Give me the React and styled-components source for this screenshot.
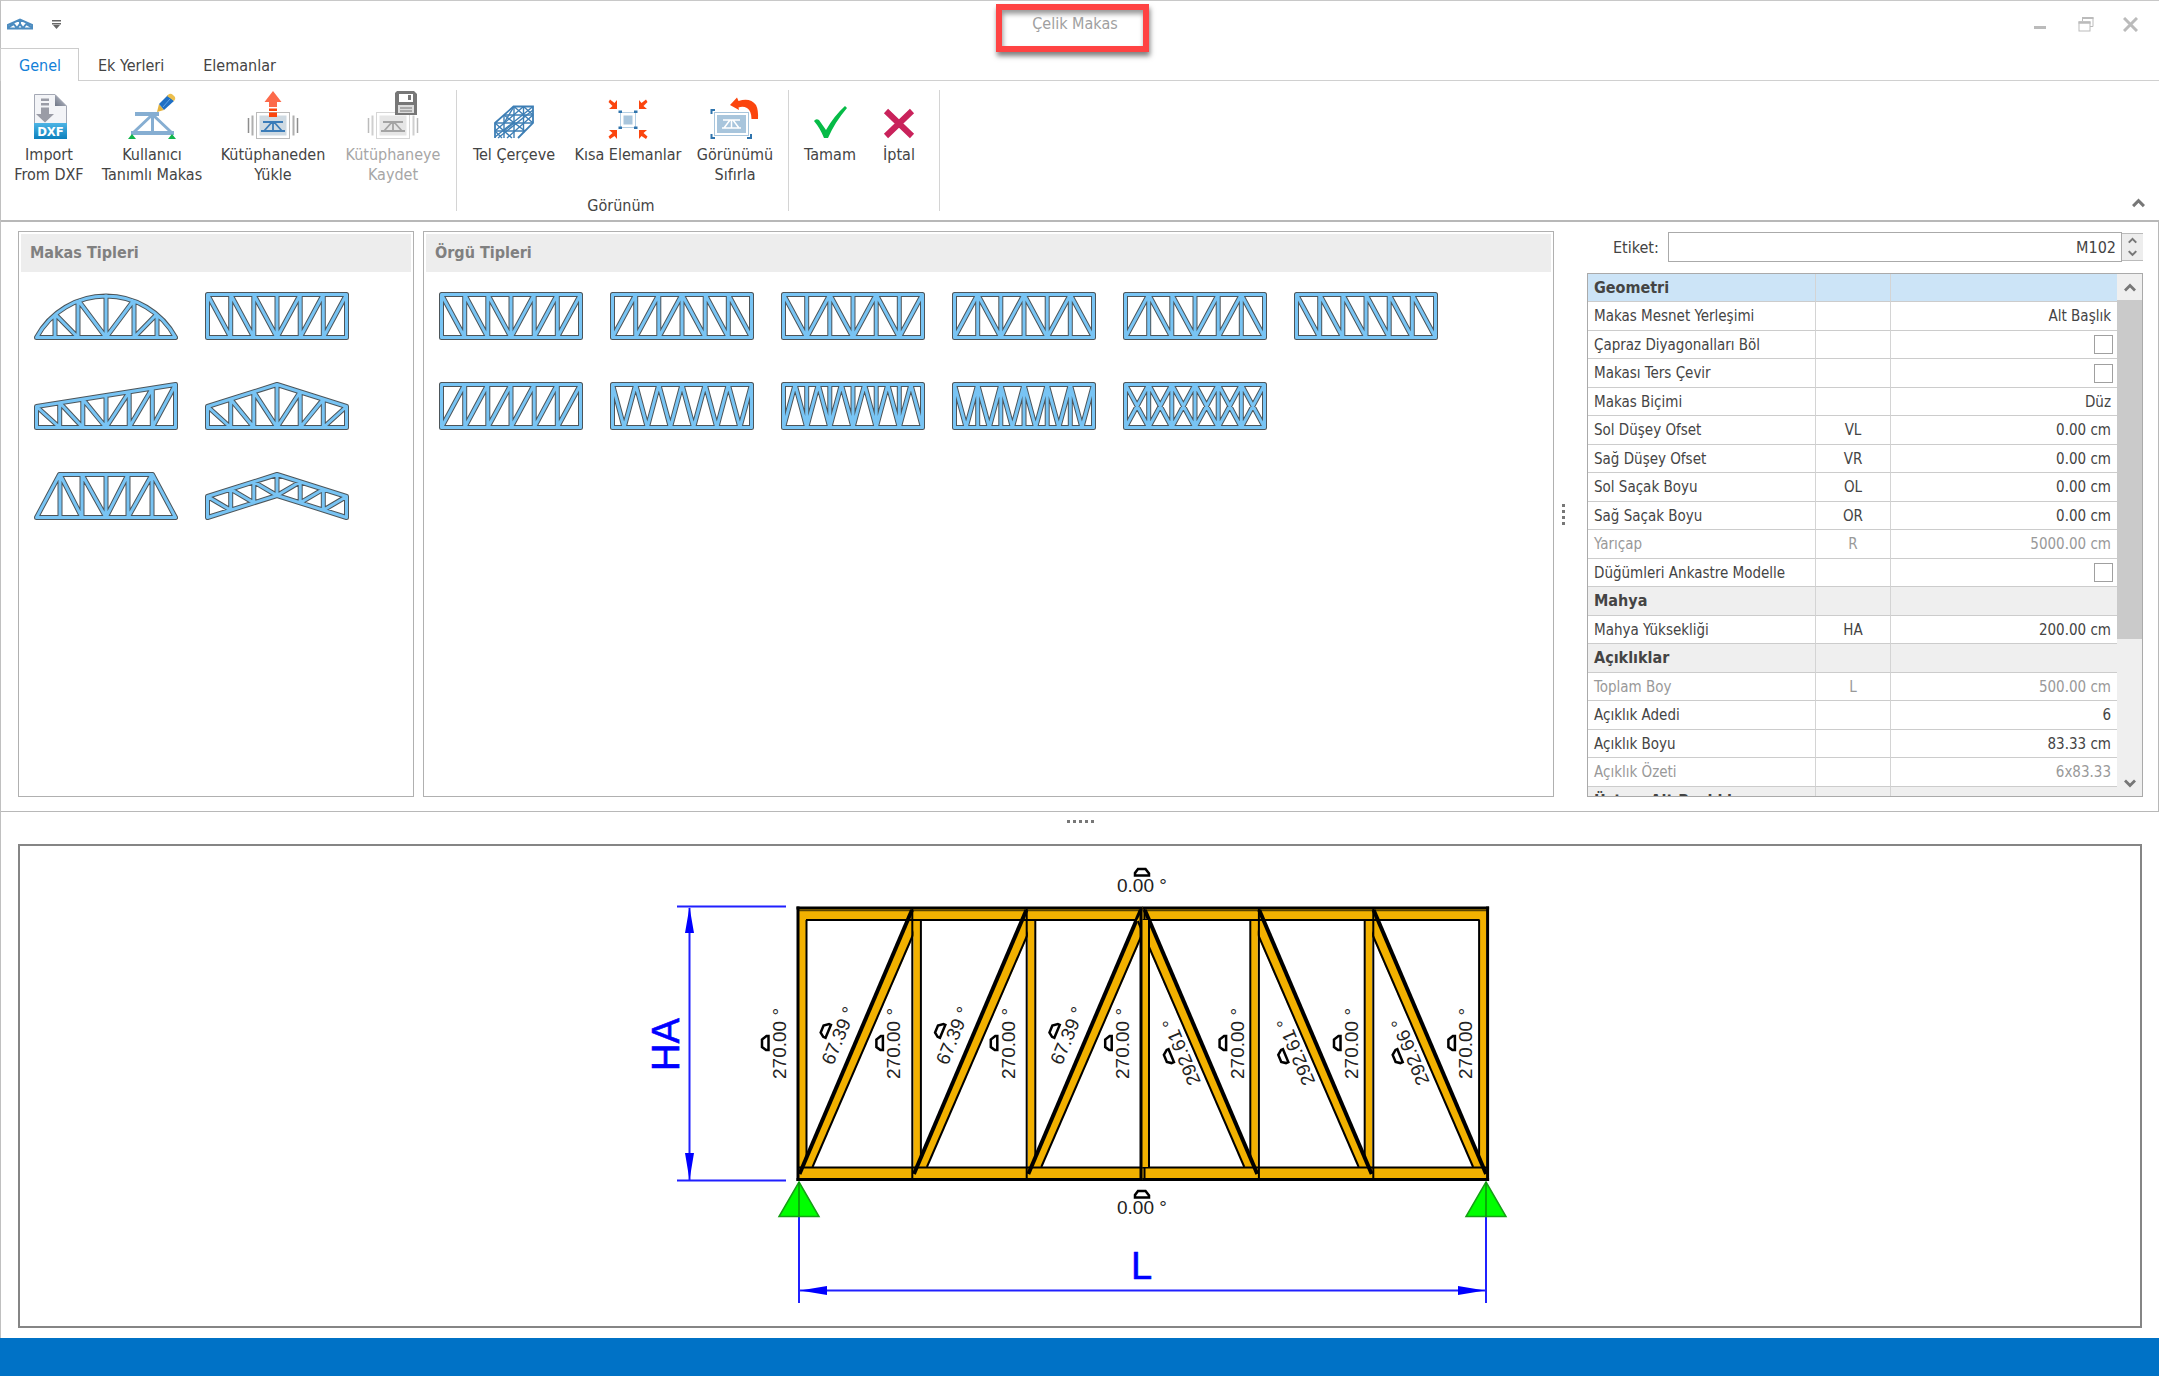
import React, { useState } from 'react'
import styled, { createGlobalStyle } from 'styled-components'

const GlobalStyle = createGlobalStyle`
    * {
        box-sizing: border-box;
    }

    body {
        margin: 0;
        background: #fff;
        color: #444;
        font-family: 'DejaVu Sans Condensed', 'DejaVu Sans', sans-serif;
        font-size: 16px;
    }

    button, input {
        font: inherit;
        color: inherit;
    }
`;

const Shell = styled.div`
    display: flex;
    flex-direction: column;
    min-height: 100vh;
    border-top: 1px solid #c8c8c8;
    border-left: 1px solid #c0c0c0;
`;

const TitleBar = styled.header`
    display: grid;
    grid-template-columns: 1fr auto 1fr;
    align-items: start;
    height: 47px;
    padding-right: 15px;
`;

const QuickAccess = styled.div`
    display: flex;
    align-items: center;
    gap: 18px;
    height: 46px;
    padding-left: 6px;
`;

const TitleFrame = styled.div`
    margin-top: 3px;
    width: 153px;
    height: 48px;
    border: 6px solid #ff4343;
    box-shadow: 1px 4px 5px rgba(0, 0, 0, 0.5), inset 1px 4px 5px rgba(0, 0, 0, 0.4);
    text-align: center;
    z-index: 1;
`;

const Title = styled.h1`
    margin: 0;
    padding-left: 5px;
    font-size: 16px;
    font-weight: normal;
    line-height: 28px;
    color: #a0a0a0;
`;

const WindowButtons = styled.div`
    display: flex;
    justify-content: flex-end;
    align-items: center;
    height: 46px;
    gap: 14px;
`;

const IconButton = styled.button`
    display: flex;
    align-items: center;
    justify-content: center;
    width: ${props => props.$w || 32}px;
    height: ${props => props.$h || 24}px;
    padding: 0;
    border: 0;
    background: none;
`;

const Tabs = styled.nav`
    display: flex;
    height: 33px;
    margin-bottom: -1px;
    position: relative;
`;

const Tab = styled.button`
    padding: 1px 17px 0 18px;
    margin-left: ${props => props.$active ? '-1px' : '0'};
    border: 1px solid ${props => props.$active ? '#ccc' : 'transparent'};
    border-bottom: 0;
    background: ${props => props.$active ? '#fff' : 'none'};
    color: ${props => props.$active ? '#1380d8' : '#444'};
    line-height: 32px;
    & + & {
        padding-right: 19px;
    }
`;

const Ribbon = styled.div`
    display: flex;
    height: 140px;
    padding-top: 9px;
    border-top: 1px solid #d0d0d0;
`;

const RibbonGroup = styled.section`
    display: flex;
    flex-direction: column;
    height: 121px;
    padding: 0 ${props => props.$right || 3}px 0 ${props => props.$left || 9}px;
    border-right: 1px solid #d4d4d4;
`;

const RibbonButtons = styled.div`
    display: flex;
    flex: 1;
`;

const RibbonButton = styled.button`
    display: flex;
    flex-direction: column;
    align-items: center;
    width: ${props => props.$w}px;
    padding: 0;
    border: 0;
    background: none;
    line-height: 20px;
    white-space: pre-line;
    &:disabled {
        color: #a6a6a6;
    }
    svg {
        margin-bottom: 5px;
        overflow: visible;
    }
`;

const GroupLabel = styled.div`
    text-align: center;
    line-height: 10px;
`;

const RibbonEnd = styled.div`
    display: flex;
    flex: 1;
    justify-content: flex-end;
    align-items: flex-end;
    padding: 0 5px 5px 0;
`;

const Workspace = styled.main`
    display: flex;
    padding: 9px 15px 14px 17px;
    border: 1px solid #b8b8b8;
    border-top-width: 2px;
    border-left: 0;
`;

const Panel = styled.section`
    width: ${props => props.$w ? props.$w + 'px' : 'auto'};
    flex: ${props => props.$w ? 'none' : 1};
    margin-right: ${props => props.$gap || 0}px;
    padding: 2px;
    border: 1px solid #b0b0b0;
`;

const PanelTitle = styled.h2`
    margin: 0;
    padding-left: 9px;
    background: #ededed;
    color: #808080;
    font-size: 16px;
    line-height: 38px;
`;

const Gallery = styled.div`
    display: grid;
    grid-template-columns: repeat(auto-fill, 144px);
    gap: 42px 27px;
    padding: 20px 13px;
`;

const GalleryItem = styled.button`
    display: block;
    height: 48px;
    padding: 0;
    border: 0;
    background: none;
    svg {
        display: block;
    }
`;

const Splitter = styled.div`
    display: flex;
    flex-direction: ${props => props.$vertical ? 'column' : 'row'};
    align-items: ${props => props.$vertical ? 'flex-start' : 'center'};
    justify-content: center;
    gap: 3px;
    ${props => props.$vertical ? 'width: 33px; padding-left: 8px;' : 'height: 32px; padding-bottom: 14px;'}
`;

const Dot = styled.i`
    width: 3px;
    height: 3px;
    background: #777;
`;

const Properties = styled.aside`
    width: 556px;
`;

const LabelRow = styled.div`
    display: flex;
    align-items: center;
    height: 32px;
    margin-bottom: 10px;
    padding-left: 26px;
    label {
        width: 55px;
    }
`;

const LabelInput = styled.input`
    flex: 1;
    min-width: 0;
    height: 30px;
    padding: 0 5px;
    border: 1px solid #aaa;
    text-align: right;
    outline: none;
`;

const Spinner = styled.div`
    display: flex;
    flex-direction: column;
    width: 21px;
    height: 28px;
    border: 1px solid #bbb;
    border-width: 1px 0;
    background: #ededed;
`;

const GridBox = styled.div`
    display: flex;
    height: 524px;
    border: 1px solid #aaa;
    overflow: hidden;
`;

const PropertyTable = styled.table`
    flex: 1;
    table-layout: fixed;
    border-spacing: 0;
    height: max-content;
    font-size: 15px;
    th, td {
        height: 28px;
        padding: 0 6px;
        border-bottom: 1px solid #ccc;
        border-right: 1px solid #d4d4d4;
        line-height: 20px;
        font-weight: normal;
        text-align: left;
        white-space: nowrap;
    }
    tr:nth-child(even) > * {
        height: 29px;
    }
    td:nth-child(2) {
        text-align: center;
    }
    td:last-child {
        border-right: 0;
        text-align: right;
    }
`;

const PropertyRow = styled.tr`
    color: ${props => props.$dim ? '#999' : '#444'};
`;

const SectionRow = styled.tr`
    background: ${props => props.$selected ? '#cce4f7' : '#efefef'};
    && th {
        font-size: 16px;
        font-weight: bold;
    }
`;

const Check = styled.input`
    appearance: none;
    display: block;
    width: 19px;
    height: 19px;
    margin: 0 -2px 0 auto;
    border: 1px solid #a0a0a0;
    background: #fff;
`;

const ScrollBar = styled.div`
    display: flex;
    flex-direction: column;
    width: 25px;
    background: #efefef;
`;

const ScrollThumb = styled.div`
    flex: 0 0 339px;
    margin-bottom: auto;
    background: #cacaca;
`;

const Canvas = styled.section`
    flex: 1;
    display: flex;
    align-items: center;
    justify-content: center;
    margin: 0 17px 10px;
    border: 2px solid #858585;
`;

const StatusBar = styled.footer`
    height: 38px;
    margin-left: -1px;
    background: #0072c6;
`;

const Chevron = ({ down, w = 12 }) => (
    <svg width={w} height={w * 0.75} viewBox="0 0 12 9" aria-hidden="true">
        <path d={down ? 'M1 1.5 6 6.5 11 1.5' : 'M1 7.5 6 2.5 11 7.5'} fill="none" stroke="#777" strokeWidth="2.8" />
    </svg>
)

/* ---- gallery trusses ---- */

const LEFT = 2.5;
const TOP = 2.5;
const BOTTOM = 45.5;
const PANEL = 139 / 6;
const nodes = [0, 1, 2, 3, 4, 5, 6].map(i => LEFT + i * PANEL);

// every panel is '\\', '/', 'x', 'v' (V inside the panel) or 'a' (inverted V)
const trussPath = (pattern, { top = () => TOP, bottom = () => BOTTOM, verticals = true } = {}) => {
    const point = (x, y) => `${x.toFixed(1)} ${y.toFixed(1)}`;
    const mid = 72;
    const upper = x => point(x, top(x));
    const lower = x => point(x, bottom(x));
    let d = `M${upper(nodes[0])}L${upper(mid)}L${upper(nodes[6])}L${lower(nodes[6])}L${lower(mid)}L${lower(nodes[0])}Z`;
    if (verticals) {
        nodes.slice(1, 6).forEach(x => { d += `M${upper(x)}L${lower(x)}`; });
    }
    pattern.split('').forEach((kind, i) => {
        const a = nodes[i];
        const b = nodes[i + 1];
        const c = (a + b) / 2;
        if (kind === '\\' || kind === 'x') d += `M${upper(a)}L${lower(b)}`;
        if (kind === '/' || kind === 'x') d += `M${lower(a)}L${upper(b)}`;
        if (kind === 'v') d += `M${upper(a)}L${lower(c)}L${upper(b)}`;
        if (kind === 'a') d += `M${lower(a)}L${upper(c)}L${lower(b)}`;
    });
    return d;
}

const gable = x => 2.5 + Math.abs(x - 72) * 22 / 69.5;

const trussTypes = [
    {
        name: 'Kemer',
        d: 'M2.5 45.5A79 79 0 0 1 141.5 45.5ZM21 22V45.5M44 8V45.5M72 2.5V45.5M100 8V45.5M123 22V45.5M21 22 44 45.5M44 8 72 45.5 100 8M100 45.5 123 22',
    },
    { name: 'Düz', d: trussPath('\\\\\\///') },
    { name: 'Tek Eğimli', d: trussPath('\\\\\\///', { top: x => 24.5 - (x - LEFT) * 22 / 139 }) },
    { name: 'Çift Eğimli', d: trussPath('\\\\\\///', { top: gable }) },
    {
        name: 'Trapez',
        d: 'M2.5 45.5 25.500 2.5H118.500L141.500 45.5ZM26 2.5V45.5M48 2.5V45.5M72 2.5V45.5M94 2.5V45.5M118 2.5V45.5M26 2.5 48 45.5M48 2.5 72 45.5 94 2.5M94 45.5 118 2.5',
    },
    { name: 'Makas', d: trussPath('\\\\\\///', { top: gable, bottom: x => gable(x) + 21 }) },
];

const webTypes = [
    { name: 'Örgü 1', d: trussPath('\\\\\\///') },
    { name: 'Örgü 2', d: trussPath('///\\\\\\') },
    { name: 'Örgü 3', d: trussPath('\\/\\/\\/') },
    { name: 'Örgü 4', d: trussPath('/\\/\\/\\') },
    { name: 'Örgü 5', d: trussPath('/\\\\//\\') },
    { name: 'Örgü 6', d: trussPath('\\\\\\\\\\\\') },
    { name: 'Örgü 7', d: trussPath('//////') },
    { name: 'Örgü 8', d: trussPath('vvvvvv', { verticals: false }) },
    { name: 'Örgü 9', d: trussPath('aaaaaa') },
    { name: 'Örgü 10', d: trussPath('vvvvvv') },
    { name: 'Örgü 11', d: trussPath('xxxxxx') },
];

const TrussGallery = ({ items }) => (
    <Gallery>
        {items.map(item => (
            <GalleryItem key={item.name} type="button" aria-label={item.name}>
                <svg width="144" height="48" viewBox="0 0 144 48" fill="none" strokeLinejoin="round">
                    <path d={item.d} stroke="#4c555a" strokeWidth="5" />
                    <path d={item.d} stroke="#78c4f4" strokeWidth="3" />
                </svg>
            </GalleryItem>
        ))}
    </Gallery>
)

/* ---- ribbon icons, all on a 52x50 canvas ---- */

const Icon = ({ children }) => (
    <svg width="52" height="50" viewBox="0 0 52 50" fill="none" aria-hidden="true">{children}</svg>
)

const DxfIcon = () => (
    <Icon>
        <defs>
            <linearGradient id="dxf" x1="0" y1="0" x2="0" y2="1">
                <stop offset="0" stopColor="#4db4e4" />
                <stop offset="1" stopColor="#0d80bd" />
            </linearGradient>
            <linearGradient id="fold" x1="0" y1="1" x2="1" y2="0">
                <stop offset="0" stopColor="#6f7686" />
                <stop offset="1" stopColor="#c9ccd6" />
            </linearGradient>
        </defs>
        <path d="M11.500 4.500H32L43.500 16V48H11.500Z" fill="#f3f4f7" stroke="#a5a9b5" />
        <path d="M32 4.500V16H43.500Z" fill="url(#fold)" />
        <path d="M18 8.500H26V11H18ZM18 13H26V15.500H18ZM18 17.500H26V24H31L22 32.500 13 24H18Z" fill="#9a9ca6" />
        <rect x="11" y="33" width="33" height="16" fill="url(#dxf)" />
        <text x="27.500" y="46" textAnchor="middle" fontSize="13" fontWeight="bold" fill="#fff">DXF</text>
    </Icon>
)

const UserTrussIcon = () => (
    <Icon>
        <path d="M5 43H48" stroke="#86aed2" strokeWidth="4" />
        <path d="M9 24H33" stroke="#86aed2" strokeWidth="4" />
        <path d="M26 25 8 42M27 25 45 42M26.500 25V42" stroke="#86aed2" strokeWidth="3" />
        <path d="M6 44 2 49H10ZM46 44 42 49H50Z" fill="#12b54d" />
        <path d="M31 22 33 14 38 20Z" fill="#e3b23f" />
        <path d="M33 14 42 5 48 11 38 20Z" fill="#1f6fc4" />
        <path d="M41 6 43 4Q45 3 47 5L49 7Q50 9 48 11Z" fill="#ecbf4e" />
        <path d="M37 17 44 9" stroke="#62a3e6" strokeWidth="1" />
    </Icon>
)

const LibraryCard = ({ truss, fill, line }) => (
    <g>
        <path d="M1.500 28V43M50.500 28V43" stroke={line} strokeWidth="1.500" />
        <path d="M5.500 25.500V45.500M46.500 25.500V45.500" stroke={line} strokeWidth="2" opacity="0.7" />
        <rect x="9.500" y="22.500" width="33" height="26" stroke={line} opacity="0.6" />
        <rect x="12.500" y="25.500" width="27" height="20" fill={fill} />
        <path d="M16 32H36M14 41H38M25 32 17 41M27 32 35 41M26 32V41" stroke={truss} strokeWidth="1.800" />
    </g>
)

const LoadIcon = () => (
    <Icon>
        <LibraryCard truss="#3b7cb8" fill="#cfdae2" line="#8d8d8d" />
        <path d="M26 1 34.500 12H30V17H22V12H17.500Z" fill="#fc6a4b" />
        <path d="M22 18.500H30V21H22ZM22 22.500H30V27H22Z" fill="#fb450e" />
    </Icon>
)

const SaveIcon = () => (
    <Icon>
        <LibraryCard truss="#a4a4a4" fill="#e6e6e6" line="#bbb" />
        <path d="M30 1H47L50 4V25H28V3Z" fill="#777" />
        <rect x="32" y="4" width="14" height="8" fill="#fff" />
        <rect x="41" y="5" width="3" height="5" fill="#777" />
        <rect x="31" y="15" width="16" height="8" fill="#ddd" />
        <path d="M33 18H45M33 21H45" stroke="#777" />
    </Icon>
)

const WireIcon = () => (
    <Icon>
        <g stroke="#3e7fb5" strokeWidth="1.400">
            <path d="M7 48V33L25.500 16.500H45V33L30 48" strokeWidth="1.800" />
            <path d="M16 25H45M7 33H45M7 41H37M16 25V48M26 16.500V48M35.500 16.500V43" />
            <path d="M7 47 45 16.500M10 48 45 20M7 41 35.500 16.500M19 48 45 25" />
            <path d="M26 16.500 45 33M16 25 37 41M7 33 24 48M35.500 16.500 45 25M7 41 14 48M26 16.500 16 33M26 33 16 41" />
        </g>
    </Icon>
)

const ShortIcon = () => (
    <Icon>
        <rect x="18.500" y="22.500" width="15" height="15" stroke="#b5cfe3" />
        <rect x="21.500" y="25.500" width="9" height="9" fill="#a8c5dc" />
        <path d="M16.500 20.500H20V23H16.500ZM32 20.500H35.500V23H32ZM16.500 36.500H20V39H16.500ZM32 36.500H35.500V39H32Z" fill="#2f74ad" />
        <path d="M7 19H15V10L12.500 13 8 9.500 6.500 12 10.500 16ZM45 19H37V10L39.500 13 44 9.500 45.500 12 41.500 16ZM7 40H15V49L12.500 46 8 49 6.500 46.500 10.500 43ZM45 40H37V49L39.500 46 44 49 45.500 46.500 41.500 43Z" fill="#fb450e" />
    </Icon>
)

const ResetIcon = () => (
    <Icon>
        <path d="M2.500 24V20H6M2.500 44V48H6M38 48H42V44" stroke="#2f74ad" strokeWidth="2" />
        <rect x="5.500" y="22.500" width="34" height="23" stroke="#a8c5dc" />
        <rect x="8" y="25" width="29" height="18" fill="#a8c5dc" />
        <path d="M14 30H31M13 38H32M21 30 15 38M24 30 30 38M22.500 30V38" stroke="#fff" strokeWidth="1.500" />
        <path d="M21 15 28 7.500 29.500 11Q41 7 47 15Q49.500 20 49 29H42.500Q42.500 21 38 18Q34 16 29.500 17.500L30 20Z" fill="#fb450e" />
    </Icon>
)

const OkIcon = () => (
    <Icon>
        <path d="M10 31Q12 28 15 30L22 40Q30 26 41 16L43 18Q31 32 24 48H20Q16 38 10 31Z" fill="#06bb47" />
    </Icon>
)

const CancelIcon = () => (
    <Icon>
        <path d="M13 21 39 46M39 21 13 46" stroke="#c9225b" strokeWidth="6" />
    </Icon>
)

/* ---- model view ---- */

const PITCH = 114.4;
const GOLD = '#f2b100';

const HalfTruss = () => (
    <g>
        {[0, 1, 2].map(i => (
            <g key={i} transform={`translate(${i * PITCH} 0)`}>
                <rect x="799" y="908" width="7" height="270" fill={GOLD} />
                <path d="M806.500 920V1167" stroke="#000" strokeWidth="2" />
                <path d="M801 1172 913 908 920 921 812.500 1168Z" fill={GOLD} />
                <path d="M812.500 1167 919 921" stroke="#000" strokeWidth="2" />
            </g>
        ))}
        <rect x="798" y="907" width="345" height="13" fill={GOLD} />
        <rect x="798" y="1167" width="345" height="13" fill={GOLD} />
        <path d="M796.500 908H1143M796.500 1179.500H1143" stroke="#000" strokeWidth="3" />
        <path d="M798 910.500H1143" stroke="#5a4300" strokeWidth="1.500" />
        <path d="M806 920H1143M798 1167.500H1143" stroke="#000" strokeWidth="2" />
        <path d="M798 906.500V1181" stroke="#000" strokeWidth="3" />
        {[0, 1, 2].map(i => (
            <g key={i} transform={`translate(${i * PITCH} 0)`} stroke="#000">
                <path d="M799.500 1174 912 910" strokeWidth="4" />
                <path d="M912.300 908V1180" strokeWidth="2" />
            </g>
        ))}
    </g>
)

const AngleMark = ({ x, y, angle = 0 }) => (
    <path
        d="M-4 -3H3.500L7 1.500V3.500H-7V1Z"
        transform={`translate(${x} ${y}) rotate(${angle})`}
        fill="#fff"
        stroke="#000"
        strokeWidth="2.500"
    />
)

const AngleText = ({ x, y, angle = 0, children }) => (
    <text transform={`translate(${x} ${y}) rotate(${angle})`}>{children}</text>
)

const Support = ({ x }) => (
    <g>
        <path d={`M${x} 1216V1303`} stroke="#2020ff" strokeWidth="2" />
        <path d={`M${x} 1182 ${x + 20} 1216.500H${x - 20}Z`} fill="#00ff00" stroke="#15a015" strokeWidth="1.500" />
        <path d={`M${x} 1182V1216`} stroke="#0a900a" strokeWidth="1.500" />
    </g>
)

const ModelView = () => (
    <svg width="880" height="452" viewBox="640 860 880 452" fill="none" fontFamily="Liberation Sans, Arial, sans-serif">
        <HalfTruss />
        <g transform="translate(2285.600 0) scale(-1 1)">
            <HalfTruss />
        </g>
        <rect x="1142" y="920" width="7" height="247" fill={GOLD} />
        <path d="M1141 908V1180" stroke="#000" strokeWidth="3" />
        <path d="M1149 920V1167" stroke="#000" strokeWidth="2" />

        <g stroke="#2020ff" strokeWidth="2">
            <path d="M677 906.500H786M677 1180.500H786M689.500 908V1180M800 1290.500H1485" />
        </g>
        <path
            d="M689.500 907 694 933H685ZM689.500 1180 694 1153H685ZM800 1290.500 827 1286V1295ZM1485 1290.500 1458 1286V1295Z"
            fill="#00f"
        />
        <Support x={799} />
        <Support x={1486} />

        <g fill="#00f" stroke="#00f" strokeWidth="0.600" fontSize="38">
            <text transform="translate(679 1071) rotate(-90)">HA</text>
            <text x="1131" y="1279">L</text>
        </g>

        <g fill="#222" fontSize="19">
            <AngleText x={1117} y={892}>0.00 °</AngleText>
            <AngleText x={1117} y={1214}>0.00 °</AngleText>
            {[0, 1, 2, 3, 4, 5, 6].map(i => (
                <AngleText key={i} x={786 + i * PITCH} y={1079} angle={-90}>270.00 °</AngleText>
            ))}
            {[0, 1, 2].map(i => (
                <AngleText key={i} x={833 + i * PITCH} y={1066} angle={-67.4}>67.39 °</AngleText>
            ))}
            {['292.61', '292.61', '292.66'].map((value, i) => (
                <AngleText key={i} x={1201 + i * PITCH} y={1082} angle={-112.6}>{value} °</AngleText>
            ))}
        </g>
        <AngleMark x={1142} y={872} />
        <AngleMark x={1142} y={1194} />
        {[0, 1, 2, 3, 4, 5, 6].map(i => <AngleMark key={i} x={765 + i * PITCH} y={1043} angle={-90} />)}
        {[0, 1, 2].map(i => <AngleMark key={i} x={825 + i * PITCH} y={1030} angle={-67.4} />)}
        {[0, 1, 2].map(i => <AngleMark key={i} x={1168 + i * PITCH} y={1057} angle={-112.6} />)}
    </svg>
)

/* ---- data ---- */

const rows = [
    { section: 'Geometri', selected: true },
    { name: 'Makas Mesnet Yerleşimi', value: 'Alt Başlık' },
    { name: 'Çapraz Diyagonalları Böl', check: true },
    { name: 'Makası Ters Çevir', check: true },
    { name: 'Makas Biçimi', value: 'Düz' },
    { name: 'Sol Düşey Ofset', code: 'VL', value: '0.00 cm' },
    { name: 'Sağ Düşey Ofset', code: 'VR', value: '0.00 cm' },
    { name: 'Sol Saçak Boyu', code: 'OL', value: '0.00 cm' },
    { name: 'Sağ Saçak Boyu', code: 'OR', value: '0.00 cm' },
    { name: 'Yarıçap', code: 'R', value: '5000.00 cm', dim: true },
    { name: 'Düğümleri Ankastre Modelle', check: true },
    { section: 'Mahya' },
    { name: 'Mahya Yüksekliği', code: 'HA', value: '200.00 cm' },
    { section: 'Açıklıklar' },
    { name: 'Toplam Boy', code: 'L', value: '500.00 cm', dim: true },
    { name: 'Açıklık Adedi', value: '6' },
    { name: 'Açıklık Boyu', value: '83.33 cm' },
    { name: 'Açıklık Özeti', value: '6x83.33', dim: true },
    { section: 'Üst ve Alt Başlıklar' },
];

const tabs = ['Genel', 'Ek Yerleri', 'Elemanlar'];

const App = () => {

    const [tab, setTab] = useState('Genel');
    const [label, setLabel] = useState('M102');

    return (
        <>
            <GlobalStyle />
            <Shell>
                <TitleBar>
                    <QuickAccess>
                        <svg width="26" height="12" viewBox="0 0 26 12" fill="none" stroke="#4c8cc0" strokeWidth="2" aria-hidden="true">
                            <path d="M1 10.500V7L13 1.500 25 7V10.500ZM6 5 10 10 13 6 16 10 20 5M13 2V6M2 9 7 6M24 9 19 6" />
                        </svg>
                        <IconButton type="button" $w={10} aria-label="Hızlı erişim">
                            <svg width="9" height="9" viewBox="0 0 9 9" fill="#666"><path d="M0 0H9V1.500H0ZM0 3H9V4.500H0ZM1 5H8L4.500 9Z" /></svg>
                        </IconButton>
                    </QuickAccess>
                    <TitleFrame>
                        <Title>Çelik Makas</Title>
                    </TitleFrame>
                    <WindowButtons>
                        <IconButton type="button" aria-label="Küçült">
                            <svg width="12" height="16" viewBox="0 0 12 16"><path d="M0 11.500H12" stroke="#bbb" strokeWidth="3" /></svg>
                        </IconButton>
                        <IconButton type="button" aria-label="Geri yükle">
                            <svg width="16" height="16" viewBox="0 0 16 16" fill="none" stroke="#bbb">
                                <path d="M4.500 5V1.500H15V10.500H12" />
                                <path d="M4 2H15.500" strokeWidth="2" />
                                <rect x="1" y="6" width="11" height="9" />
                                <path d="M0.500 6.500H12.500" strokeWidth="2.500" />
                            </svg>
                        </IconButton>
                        <IconButton type="button" $w={28} aria-label="Kapat">
                            <svg width="15" height="15" viewBox="0 0 15 15" stroke="#bbb" strokeWidth="3"><path d="M1 1 14 14M14 1 1 14" /></svg>
                        </IconButton>
                    </WindowButtons>
                </TitleBar>

                <Tabs>
                    {tabs.map(name => (
                        <Tab key={name} type="button" $active={name === tab} onClick={() => setTab(name)}>{name}</Tab>
                    ))}
                </Tabs>

                <Ribbon>
                    <RibbonGroup $left={6}>
                        <RibbonButtons>
                            <RibbonButton type="button" $w={84}><DxfIcon />{'Import\nFrom DXF'}</RibbonButton>
                            <RibbonButton type="button" $w={122}><UserTrussIcon />{'Kullanıcı\nTanımlı Makas'}</RibbonButton>
                            <RibbonButton type="button" $w={120}><LoadIcon />{'Kütüphaneden\nYükle'}</RibbonButton>
                            <RibbonButton type="button" $w={120} disabled><SaveIcon />{'Kütüphaneye\nKaydet'}</RibbonButton>
                        </RibbonButtons>
                    </RibbonGroup>
                    <RibbonGroup $right={12}>
                        <RibbonButtons>
                            <RibbonButton type="button" $w={96}><WireIcon />Tel Çerçeve</RibbonButton>
                            <RibbonButton type="button" $w={132}><ShortIcon />Kısa Elemanlar</RibbonButton>
                            <RibbonButton type="button" $w={82}><ResetIcon />{'Görünümü\nSıfırla'}</RibbonButton>
                        </RibbonButtons>
                        <GroupLabel>Görünüm</GroupLabel>
                    </RibbonGroup>
                    <RibbonGroup>
                        <RibbonButtons>
                            <RibbonButton type="button" $w={64}><OkIcon />Tamam</RibbonButton>
                            <RibbonButton type="button" $w={74}><CancelIcon />İptal</RibbonButton>
                        </RibbonButtons>
                    </RibbonGroup>
                    <RibbonEnd>
                        <IconButton type="button" aria-label="Şeridi daralt"><Chevron w={13} /></IconButton>
                    </RibbonEnd>
                </Ribbon>

                <Workspace>
                    <Panel $w={396} $gap={9}>
                        <PanelTitle>Makas Tipleri</PanelTitle>
                        <TrussGallery items={trussTypes} />
                    </Panel>
                    <Panel>
                        <PanelTitle>Örgü Tipleri</PanelTitle>
                        <TrussGallery items={webTypes} />
                    </Panel>
                    <Splitter $vertical>
                        <Dot /><Dot /><Dot /><Dot />
                    </Splitter>
                    <Properties>
                        <LabelRow>
                            <label htmlFor="etiket">Etiket:</label>
                            <LabelInput id="etiket" value={label} onChange={e => setLabel(e.target.value)} />
                            <Spinner>
                                <IconButton type="button" $w={21} $h={13} aria-label="Artır"><Chevron w={9} /></IconButton>
                                <IconButton type="button" $w={21} $h={13} aria-label="Azalt"><Chevron down w={9} /></IconButton>
                            </Spinner>
                        </LabelRow>
                        <GridBox>
                            <PropertyTable>
                                <colgroup>
                                    <col />
                                    <col width="75" />
                                    <col width="226" />
                                </colgroup>
                                <tbody>
                                    {rows.map(row => row.section ? (
                                        <SectionRow key={row.section} $selected={row.selected}>
                                            <th scope="row">{row.section}</th>
                                            <td />
                                            <td />
                                        </SectionRow>
                                    ) : (
                                        <PropertyRow key={row.name} $dim={row.dim}>
                                            <th scope="row">{row.name}</th>
                                            <td>{row.code}</td>
                                            <td>{row.check ? <Check type="checkbox" aria-label={row.name} /> : row.value}</td>
                                        </PropertyRow>
                                    ))}
                                </tbody>
                            </PropertyTable>
                            <ScrollBar>
                                <IconButton type="button" $w={25} $h={26} aria-label="Yukarı"><Chevron /></IconButton>
                                <ScrollThumb />
                                <IconButton type="button" $w={25} $h={26} aria-label="Aşağı"><Chevron down /></IconButton>
                            </ScrollBar>
                        </GridBox>
                    </Properties>
                </Workspace>

                <Splitter>
                    <Dot /><Dot /><Dot /><Dot /><Dot />
                </Splitter>
                <Canvas>
                    <ModelView />
                </Canvas>
                <StatusBar />
            </Shell>
        </>
    )
}

export default App
